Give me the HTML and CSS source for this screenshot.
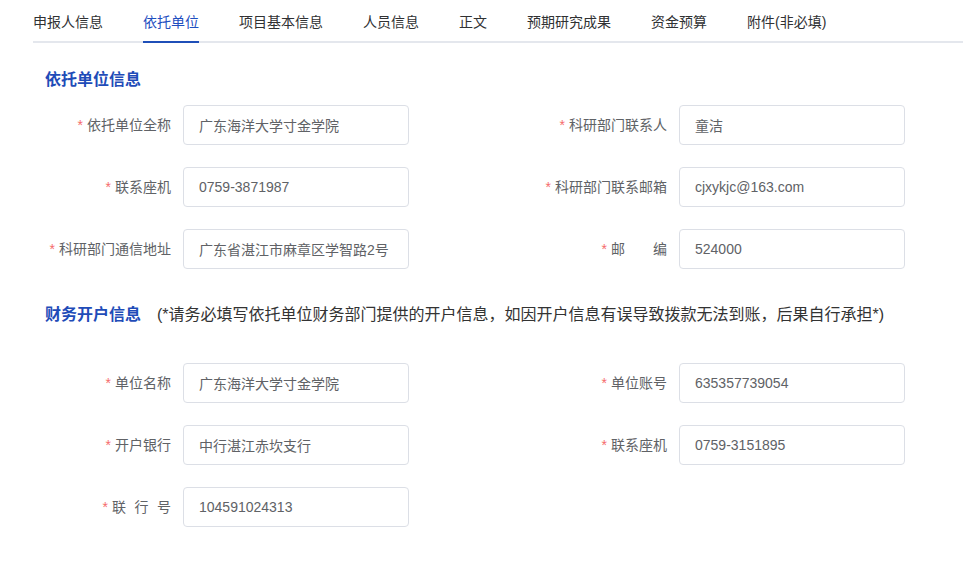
FILE: index.html
```html
<!DOCTYPE html>
<html lang="zh-CN">
<head>
<meta charset="utf-8">
<title>依托单位</title>
<link rel="stylesheet" href="styles.css">
</head>
<body>
<nav class="tabs">
  <div class="tab"><span class="tab-label">申报人信息</span></div>
  <div class="tab active"><span class="tab-label">依托单位</span></div>
  <div class="tab"><span class="tab-label">项目基本信息</span></div>
  <div class="tab"><span class="tab-label">人员信息</span></div>
  <div class="tab"><span class="tab-label">正文</span></div>
  <div class="tab"><span class="tab-label">预期研究成果</span></div>
  <div class="tab"><span class="tab-label">资金预算</span></div>
  <div class="tab"><span class="tab-label">附件(非必填)</span></div>
</nav>

<section class="section first">
  <h2 class="section-title">依托单位信息</h2>
  <div class="form">
    <div class="item"><label class="label">依托单位全称</label><input class="input" type="text" value="广东海洋大学寸金学院" readonly></div>
    <div class="item"><label class="label">科研部门联系人</label><input class="input" type="text" value="童洁" readonly></div>
    <div class="item"><label class="label">联系座机</label><input class="input" type="text" value="0759-3871987" readonly></div>
    <div class="item"><label class="label">科研部门联系邮箱</label><input class="input" type="text" value="cjxykjc@163.com" readonly></div>
    <div class="item"><label class="label">科研部门通信地址</label><input class="input" type="text" value="广东省湛江市麻章区学智路2号" readonly></div>
    <div class="item"><label class="label">邮　　编</label><input class="input" type="text" value="524000" readonly></div>
  </div>
</section>

<section class="section second">
  <h2 class="section-title">财务开户信息<span class="note">(*请务必填写依托单位财务部门提供的开户信息，如因开户信息有误导致拨款无法到账，后果自行承担*)</span></h2>
  <div class="form">
    <div class="item"><label class="label">单位名称</label><input class="input" type="text" value="广东海洋大学寸金学院" readonly></div>
    <div class="item"><label class="label">单位账号</label><input class="input" type="text" value="635357739054" readonly></div>
    <div class="item"><label class="label">开户银行</label><input class="input" type="text" value="中行湛江赤坎支行" readonly></div>
    <div class="item"><label class="label">联系座机</label><input class="input" type="text" value="0759-3151895" readonly></div>
    <div class="item"><label class="label"><span class="spread">联行</span>号</label><input class="input" type="text" value="104591024313" readonly></div>
  </div>
</section>
</body>
</html>
```

FILE: styles.css
```css
* {
  box-sizing: border-box;
}

html, body {
  margin: 0;
  padding: 0;
  background: #fff;
  overflow: hidden;
}

body {
  font-family: "Liberation Sans", "Noto Sans CJK SC", sans-serif;
  font-size: 14px;
  color: #303133;
}

.tabs {
  display: flex;
  margin-left: 33px;
  padding-top: 4px;
  border-bottom: 2px solid #e4e7ed;
}

.tab {
  padding: 0 20px;
  margin-bottom: -2px;
}

.tab:first-child {
  padding-left: 0;
}

.tab-label {
  display: block;
  line-height: 37px;
  border-bottom: 2px solid transparent;
  color: #303133;
  white-space: nowrap;
}

.tab.active .tab-label {
  color: #1f4fbf;
  border-bottom-color: #1f4fb8;
}

.section-title {
  margin: 0;
  padding-left: 45px;
  font-size: 16px;
  line-height: 24px;
  font-weight: bold;
  color: #1f4cb8;
  white-space: nowrap;
}

.section.first .section-title {
  margin-top: 25px;
  margin-bottom: 13px;
}

.section.second .section-title {
  margin-top: 34px;
  margin-bottom: 36px;
}

.note {
  margin-left: 16px;
  font-weight: normal;
  color: #333;
}

.form {
  display: grid;
  grid-template-columns: 496px auto;
  row-gap: 22px;
  margin-left: 33px;
}

.item {
  display: flex;
  align-items: center;
}

.label {
  width: 150px;
  padding-right: 12px;
  text-align: right;
  line-height: 40px;
  color: #606266;
  white-space: nowrap;
}

.label::before {
  content: "*";
  color: #f56c6c;
  margin-right: 4px;
}

.spread {
  letter-spacing: 8.5px;
}

.input {
  width: 226px;
  height: 40px;
  padding: 0 15px;
  border: 1px solid #dcdfe6;
  border-radius: 4px;
  background: #fff;
  font-family: "Liberation Sans", "Noto Sans CJK SC", sans-serif;
  font-size: 14px;
  color: #606266;
  outline: none;
}
```
